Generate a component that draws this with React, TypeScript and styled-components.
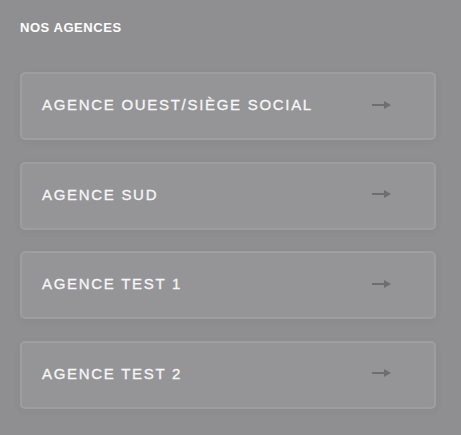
import React from "react";
import styled, { createGlobalStyle } from "styled-components";

const Global = createGlobalStyle`
  html, body { margin: 0; padding: 0; background: #8f8f91; }
  body { font-family: "Liberation Sans", Arial, sans-serif; }
`;

const Page = styled.div`
  padding: 20px 25px 20px 20px;
  width: 461px;
  box-sizing: border-box;
`;

const Title = styled.h2`
  margin: 0 0 36px 0;
  font-size: 13px;
  line-height: 16px;
  font-weight: 700;
  letter-spacing: 0.55px;
  color: #ffffff;
`;

const List = styled.div`
  display: flex;
  flex-direction: column;
  gap: 21.5px;
`;

const Card = styled.a`
  display: flex;
  align-items: center;
  justify-content: space-between;
  height: 68px;
  box-sizing: border-box;
  padding: 0 43px 3px 20px;
  background: #959597;
  border: 2px solid #9e9ea0;
  border-radius: 5px;
  box-shadow: 0 2px 10px rgba(0, 0, 0, 0.04);
  text-decoration: none;
  cursor: pointer;
`;

const Label = styled.span`
  font-size: 15px;
  font-weight: 400;
  letter-spacing: 1.7px;
  color: #f7f7f7;
  -webkit-text-stroke: 0.3px #f7f7f7;
`;

const Arrow = () => (
  <svg width="19" height="10" viewBox="0 0 19 10">
    <path d="M0 5 H13" stroke="#6e6e70" strokeWidth="2" />
    <path d="M12 1 L19 5 L12 9 Z" fill="#6e6e70" />
  </svg>
);

const agences = [
  "AGENCE OUEST/SIÈGE SOCIAL",
  "AGENCE SUD",
  "AGENCE TEST 1",
  "AGENCE TEST 2",
];

export default function App() {
  return (
    <>
      <Global />
      <Page>
        <Title>NOS AGENCES</Title>
        <List>
          {agences.map((a) => (
            <Card key={a}>
              <Label>{a}</Label>
              <Arrow />
            </Card>
          ))}
        </List>
      </Page>
    </>
  );
}
